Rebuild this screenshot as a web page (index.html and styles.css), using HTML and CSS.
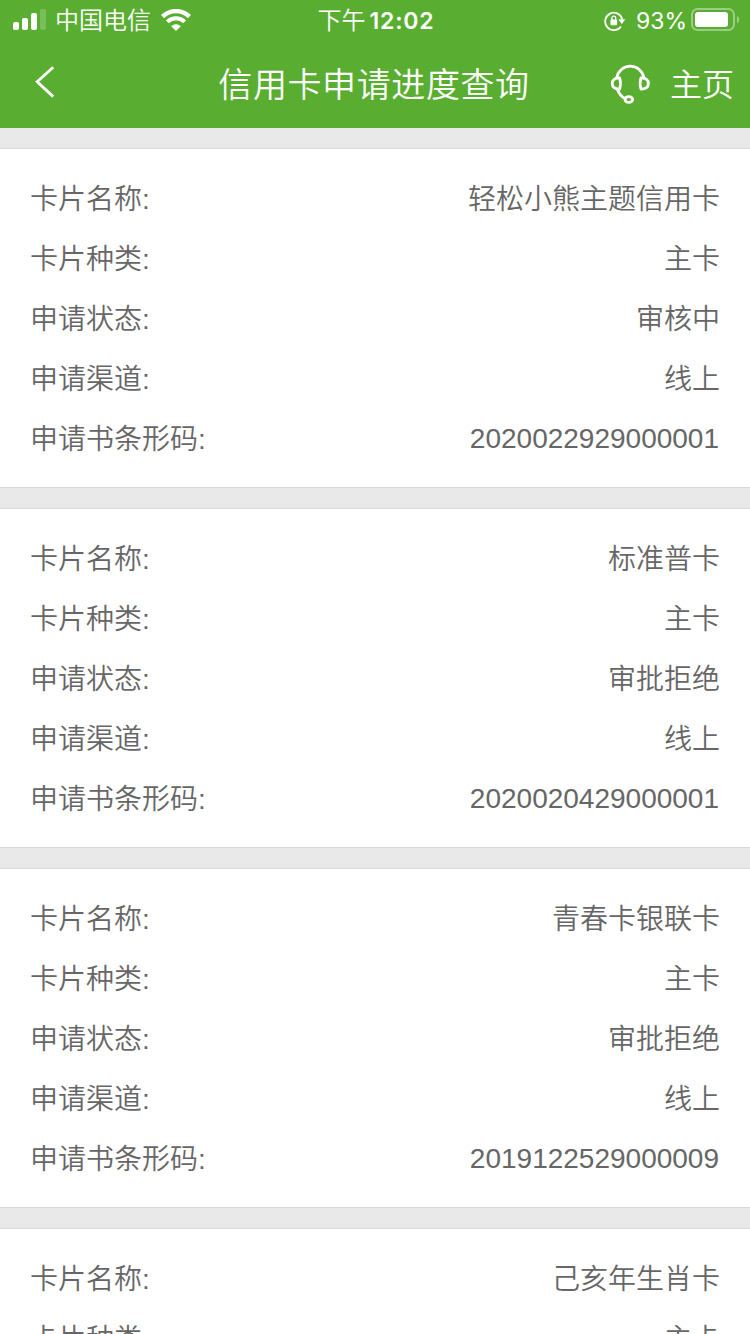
FILE: index.html
```html
<!DOCTYPE html>
<html lang="zh-CN">

<head>
  <meta charset="UTF-8">
  <meta name="viewport" content="width=device-width, initial-scale=1.0">
  <title>信用卡申请进度查询</title>
  <link rel="stylesheet" href="styles.css">
</head>

<body>
  <header class="header">
    <div class="status-bar">
      <div class="status-left">
        <svg class="signal" width="34" height="22" viewBox="0 0 34 22" fill="#fff">
          <rect x="1" y="13" width="6" height="8" rx="2"/>
          <rect x="10" y="9" width="6" height="12" rx="2"/>
          <rect x="19" y="4" width="6" height="17" rx="2"/>
          <rect x="28" y="0" width="6" height="21" rx="2" opacity="0.2"/>
        </svg>
        <span class="carrier">中国电信</span>
        <svg class="wifi" width="30" height="22" viewBox="0 0 30 22" fill="none" stroke="#fff">
          <path d="M1.6 7.6a19 19 0 0 1 26.8 0" stroke-width="4.4"/>
          <path d="M6.4 12.9a12.2 12.2 0 0 1 17.2 0" stroke-width="4"/>
          <path d="M15 22l-4.8-4.8a6.9 6.9 0 0 1 9.6 0z" fill="#fff" stroke="none"/>
        </svg>
      </div>
      <div class="time">下午<span class="clock">12:02</span></div>
      <div class="status-right">
        <svg class="lock" width="22" height="20" viewBox="0 0 22 20" fill="none" stroke="#fff">
          <path d="M17 15.4A8.7 8.7 0 1 1 18.2 8" stroke-width="1.8"/>
          <path d="M14.3 8.2h7l-3.5 4.8z" fill="#fff" stroke="none"/>
          <rect x="6.5" y="8.6" width="6.6" height="5.6" rx="0.8" fill="#fff" stroke="none"/>
          <path d="M7.9 9V7a1.9 1.9 0 0 1 3.8 0v2" stroke-width="1.3"/>
        </svg>
        <span class="percent">93%</span>
        <svg class="battery" width="49" height="24" viewBox="0 0 49 24" fill="#fff">
          <rect x="1" y="1" width="42" height="21" rx="5.5" fill="none" stroke="#fff" stroke-width="2" opacity="0.4"/>
          <rect x="4" y="4" width="33" height="15" rx="3"/>
          <path d="M46 8c3 1 3 6 0 7z" opacity="0.4"/>
        </svg>
      </div>
    </div>
    <nav class="nav-bar">
      <svg class="back" width="20" height="32" viewBox="0 0 20 32" fill="none" stroke="#fff" stroke-width="2.8">
        <path d="M18.2 1.2L2.2 15.8l16 14.8"/>
      </svg>
      <h1 class="title">信用卡申请进度查询</h1>
      <div class="nav-actions">
        <svg class="service" width="40" height="40" viewBox="0 0 40 40" fill="none" stroke="#fff" stroke-width="2.8" stroke-linecap="round" stroke-linejoin="round">
          <path d="M6.6 14C8 7 13.5 2.2 20.3 2.2S32.600 7 34 14"/>
          <path d="M9.6 14c-4.800-.3-7.400 2-7.400 5.500s2.600 5.800 7.400 5.500c1.200-3.500 1.200-7.500 0-11z"/>
          <path d="M31 14c4.800-.3 7.400 2 7.400 5.500s-2.600 5.800-7.400 5.500c-1.200-3.500-1.200-7.500 0-11z"/>
          <path d="M7.5 25.500c1.500 4.300 4 7.400 7.800 9.200"/>
          <ellipse cx="18.800" cy="35.500" rx="3.800" ry="2.900"/>
        </svg>
        <a class="home">主页</a>
      </div>
    </nav>
  </header>

  <main class="list">
    <section class="card">
      <div class="row"><span>卡片名称:</span><span>轻松小熊主题信用卡</span></div>
      <div class="row"><span>卡片种类:</span><span>主卡</span></div>
      <div class="row"><span>申请状态:</span><span>审核中</span></div>
      <div class="row"><span>申请渠道:</span><span>线上</span></div>
      <div class="row"><span>申请书条形码:</span><span class="barcode">2020022929000001</span></div>
    </section>
    <section class="card">
      <div class="row"><span>卡片名称:</span><span>标准普卡</span></div>
      <div class="row"><span>卡片种类:</span><span>主卡</span></div>
      <div class="row"><span>申请状态:</span><span>审批拒绝</span></div>
      <div class="row"><span>申请渠道:</span><span>线上</span></div>
      <div class="row"><span>申请书条形码:</span><span class="barcode">2020020429000001</span></div>
    </section>
    <section class="card">
      <div class="row"><span>卡片名称:</span><span>青春卡银联卡</span></div>
      <div class="row"><span>卡片种类:</span><span>主卡</span></div>
      <div class="row"><span>申请状态:</span><span>审批拒绝</span></div>
      <div class="row"><span>申请渠道:</span><span>线上</span></div>
      <div class="row"><span>申请书条形码:</span><span class="barcode">2019122529000009</span></div>
    </section>
    <section class="card">
      <div class="row"><span>卡片名称:</span><span>己亥年生肖卡</span></div>
      <div class="row"><span>卡片种类:</span><span>主卡</span></div>
    </section>
  </main>
</body>

</html>
```
FILE: styles.css
```css
* {
  box-sizing: border-box;
}

body {
  font-family: "Liberation Sans", "Noto Sans CJK SC DemiLight", "Noto Sans CJK SC", sans-serif;
  font-weight: 350;
  margin: 0;
  height: 1334px;
  display: flex;
  flex-direction: column;
  overflow: hidden;
  background-color: #e9e9e9;
  color: #666;
}

.header {
  flex: none;
  height: 128px;
  background-color: #59ae32;
  color: #fff;
}

.status-bar {
  display: grid;
  grid-template-columns: 1fr auto 1fr;
  align-items: center;
  height: 40px;
  padding: 0 10px 0 12px;
  font-size: 24px;
  line-height: 40px;
}

.status-left,
.status-right {
  display: flex;
  align-items: center;
}

.status-right {
  justify-content: flex-end;
}

.signal {
  margin-top: -1px;
}

.carrier {
  margin: 0 10px 0 9px;
}

.wifi {
  margin-top: -1px;
}

.time {
  font-weight: 400;
}

.clock {
  margin-left: 4px;
  font-family: Inter, sans-serif;
  font-size: 23px;
  font-weight: 600;
  letter-spacing: 0.8px;
}

.lock {
  margin-top: 1px;
}

.percent {
  margin: 0 4px 0 10px;
  font-family: Inter, sans-serif;
  font-size: 23px;
  font-weight: 400;
}

.carrier,
.time,
.percent {
  padding-top: 1px;
}

.battery {
  margin-top: -1px;
}

.nav-bar {
  display: grid;
  grid-template-columns: 1fr auto 1fr;
  align-items: center;
  height: 84px;
  padding: 0 16px;
}

.back {
  margin: -1px 0 0 19px;
}

.title {
  margin: 0 2px 0 0;
  font-size: 34px;
  font-weight: 350;
  letter-spacing: 0.6px;
}

.nav-actions {
  display: flex;
  align-items: center;
  justify-content: flex-end;
  gap: 20px;
}

.service {
  margin-top: 4px;
}

.home {
  font-size: 32px;
}

.list {
  flex: 1;
  min-height: 0;
  padding-top: 20px;
}

.card {
  margin-bottom: 20px;
  padding: 21px 30px 17px;
  border-top: 1px solid #d9d9d9;
  border-bottom: 1px solid #d9d9d9;
  background-color: #fff;
}

.row {
  display: flex;
  justify-content: space-between;
  height: 60px;
  font-size: 28px;
  line-height: 60px;
}

.barcode {
  margin-right: 1px;
  line-height: 58px;
}
```
